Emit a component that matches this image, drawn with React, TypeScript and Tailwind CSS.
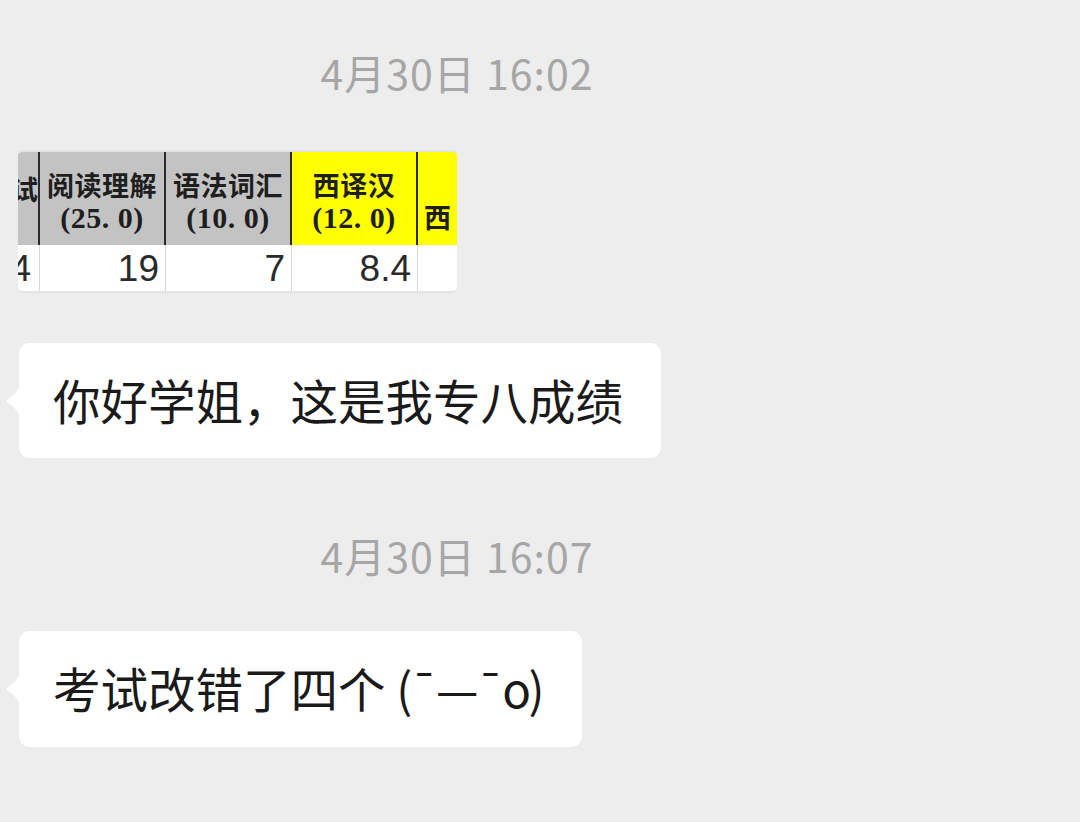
import React from "react";

const CJK = '"Noto Sans CJK SC", "Noto Sans", sans-serif';

function Tail() {
  return (
    <svg
      className="absolute left-[-15px] top-1/2 -translate-y-1/2"
      width="16"
      height="30"
      viewBox="0 0 16 30"
    >
      <path d="M16 0 L16 30 C13 24 8 19 3 16.5 Q1 15 3 13.5 C8 11 13 6 16 0 Z" fill="#ffffff" />
    </svg>
  );
}

function Bubble({ text, width }: { text: React.ReactNode; width: string }) {
  return (
    <div className={`relative ml-[19px] bg-white rounded-[11px] flex items-center pl-[34px] ${width}`}>
      <Tail />
      <span className="text-[47.5px] leading-none text-[#1a1a1a] -mt-[2px] whitespace-nowrap" style={{ fontFamily: CJK }}>
        {text}
      </span>
    </div>
  );
}

function Stamp({ text }: { text: string }) {
  return (
    <div
      className="h-[48px] flex items-center justify-center pr-[166px] text-[41px] leading-none text-[#a6a6a6] tracking-[1px]"
      style={{ fontFamily: CJK }}
    >
      {text}
    </div>
  );
}

const serif = '"Liberation Serif", "Noto Sans CJK SC", serif';

function HeadCell({
  top,
  bottom,
  w,
  bg,
}: {
  top: string;
  bottom: string;
  w: string;
  bg: string;
}) {
  return (
    <div
      className={`${w} ${bg} border-r-2 border-[#2a2a2a] flex flex-col items-center justify-center text-[#1e1e1e] shrink-0 pt-[5px]`}
    >
      <div className="text-[27px] leading-[32px] font-bold tracking-[0.5px]" style={{ fontFamily: CJK }}>
        {top}
      </div>
      <div className="text-[30px] leading-[32px] font-bold mt-[1px] tracking-[0.5px]" style={{ fontFamily: serif }}>
        {bottom}
      </div>
    </div>
  );
}

function DataCell({ v, w }: { v: string; w: string }) {
  return (
    <div
      className={`${w} border-r border-[#d8d8d8] flex items-center justify-end pr-[6px] shrink-0 overflow-hidden text-[37px] leading-none text-[#2a2a2a]`}
      style={{ fontFamily: '"Liberation Sans", Arial, sans-serif' }}
    >
      {v}
    </div>
  );
}

function Table() {
  return (
    <div className="ml-[18px] w-[439px] h-[143px] rounded-[5px] overflow-hidden bg-white border-t-2 border-b-2 border-[#e4e4e4] flex flex-col">
      <div className="h-[93px] flex">
        <div className="w-[22px] shrink-0 bg-[#c3c3c3] border-r-2 border-[#2a2a2a] flex items-start justify-end overflow-hidden pt-[21px]">
          <span className="text-[27px] leading-[32px] font-bold text-[#1e1e1e] whitespace-nowrap" style={{ fontFamily: CJK }}>
            试
          </span>
        </div>
        <HeadCell top="阅读理解" bottom="(25. 0)" w="w-[126px]" bg="bg-[#c3c3c3]" />
        <HeadCell top="语法词汇" bottom="(10. 0)" w="w-[126px]" bg="bg-[#c3c3c3]" />
        <HeadCell top="西译汉" bottom="(12. 0)" w="w-[126px]" bg="bg-[#ffff00]" />
        <div className="flex-1 bg-[#ffff00] flex items-center pl-[6px] pt-[36px]">
          <span className="text-[27px] leading-[32px] font-bold text-[#1e1e1e]" style={{ fontFamily: CJK }}>
            西
          </span>
        </div>
      </div>
      <div className="flex-1 flex">
        <div
          className="w-[22px] shrink-0 border-r border-[#d8d8d8] flex items-center justify-end pr-[8px] overflow-hidden text-[37px] leading-none text-[#2a2a2a]"
          style={{ fontFamily: '"Liberation Sans", Arial, sans-serif' }}
        >
          4
        </div>
        <DataCell v="19" w="w-[126px]" />
        <DataCell v="7" w="w-[126px]" />
        <DataCell v="8.4" w="w-[126px]" />
        <div className="flex-1" />
      </div>
    </div>
  );
}

export default function App() {
  return (
    <div className="w-[1080px] h-[822px] bg-[#ededed] overflow-hidden flex flex-col pt-[48px]">
      <Stamp text="4月30日 16:02" />
      <div className="mt-[54px]">
        <Table />
      </div>
      <div className="mt-[50px]">
        <Bubble text="你好学姐，这是我专八成绩" width="w-[642px] h-[115px]" />
      </div>
      <div className="mt-[73px]">
        <Stamp text="4月30日 16:07" />
      </div>
      <div className="mt-[52px]">
        <Bubble
          text={
            <>
              考试改错了四个 <span className="tracking-[-2.5px]">(¯—¯o)</span>
            </>
          }
          width="w-[563px] h-[116px]"
        />
      </div>
    </div>
  );
}
